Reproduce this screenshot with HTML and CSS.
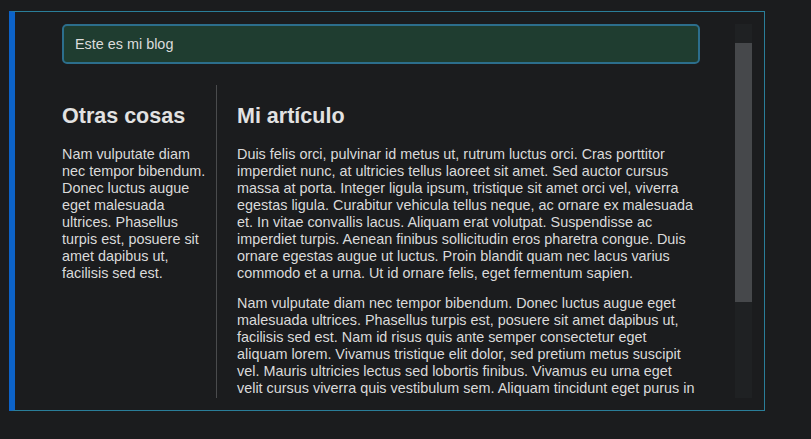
FILE: index.html
```html
<!DOCTYPE html>
<html lang="es">
<head>
<meta charset="utf-8">
<title>Mi blog</title>
<link rel="stylesheet" href="styles.css">
</head>
<body>
<div class="frame">
  <div class="viewport">
    <div class="page">
      <header class="banner">Este es mi blog</header>
      <div class="columns">
        <aside class="sidebar">
          <h2>Otras cosas</h2>
          <p>Nam vulputate diam nec tempor bibendum. Donec luctus augue eget malesuada ultrices. Phasellus turpis est, posuere sit amet dapibus ut, facilisis sed est.</p>
        </aside>
        <main class="article">
          <h2>Mi artículo</h2>
          <p>Duis felis orci, pulvinar id metus ut, rutrum luctus orci. Cras porttitor imperdiet nunc, at ultricies tellus laoreet sit amet. Sed auctor cursus massa at porta. Integer ligula ipsum, tristique sit amet orci vel, viverra egestas ligula. Curabitur vehicula tellus neque, ac ornare ex malesuada et. In vitae convallis lacus. Aliquam erat volutpat. Suspendisse ac imperdiet turpis. Aenean finibus sollicitudin eros pharetra congue. Duis ornare egestas augue ut luctus. Proin blandit quam nec lacus varius commodo et a urna. Ut id ornare felis, eget fermentum sapien.</p>
          <p>Nam vulputate diam nec tempor bibendum. Donec luctus augue eget malesuada ultrices. Phasellus turpis est, posuere sit amet dapibus ut, facilisis sed est. Nam id risus quis ante semper consectetur eget aliquam lorem. Vivamus tristique elit dolor, sed pretium metus suscipit vel. Mauris ultricies lectus sed lobortis finibus. Vivamus eu urna eget velit cursus viverra quis vestibulum sem. Aliquam tincidunt eget purus in interdum. Cum sociis natoque penatibus et magnis dis parturient montes.</p>
        </main>
      </div>
    </div>
  </div>
  <div class="scrollbar"><div class="thumb"></div></div>
</div>
</body>
</html>
```
FILE: styles.css
```css
html, body {
  background: #1b1c1e;
}
body {
  margin: 0;
  padding: 11px 0 0 9px;
  font-family: "Liberation Sans", Arial, sans-serif;
  font-size: 14.4px;
  color: #dadada;
}
.frame {
  box-sizing: border-box;
  width: 756px;
  height: 400px;
  display: flex;
  border: 1px solid #2a7e99;
  border-left: 6px solid #0c62c8;
  padding: 12px;
  background: #1b1c1e;
}
.viewport {
  flex: 1;
  overflow: hidden;
}
.page {
  width: 638px;
  margin: 0 auto;
}
.banner {
  border: 2px solid #2c6e8c;
  border-radius: 5px;
  background: #1f3d30;
  padding: 10px 11px;
  line-height: 16px;
  color: #dcdcdc;
}
.columns {
  display: flex;
  margin-top: 21px;
}
.sidebar {
  width: 154px;
  flex: none;
  border-right: 1px solid #4a4b4d;
}
.article {
  flex: 1;
  padding-left: 20px;
}
h2 {
  font-size: 21.5px;
  line-height: 24px;
  font-weight: bold;
  color: #e2e2e2;
  margin: 19px 0 18px;
}
p {
  margin: 0 0 13px;
  line-height: 17px;
}
.scrollbar {
  width: 17px;
  flex: none;
  background: #1f2123;
  padding-top: 19px;
  box-sizing: border-box;
}
.thumb {
  height: 259px;
  background: #46484b;
}
```
